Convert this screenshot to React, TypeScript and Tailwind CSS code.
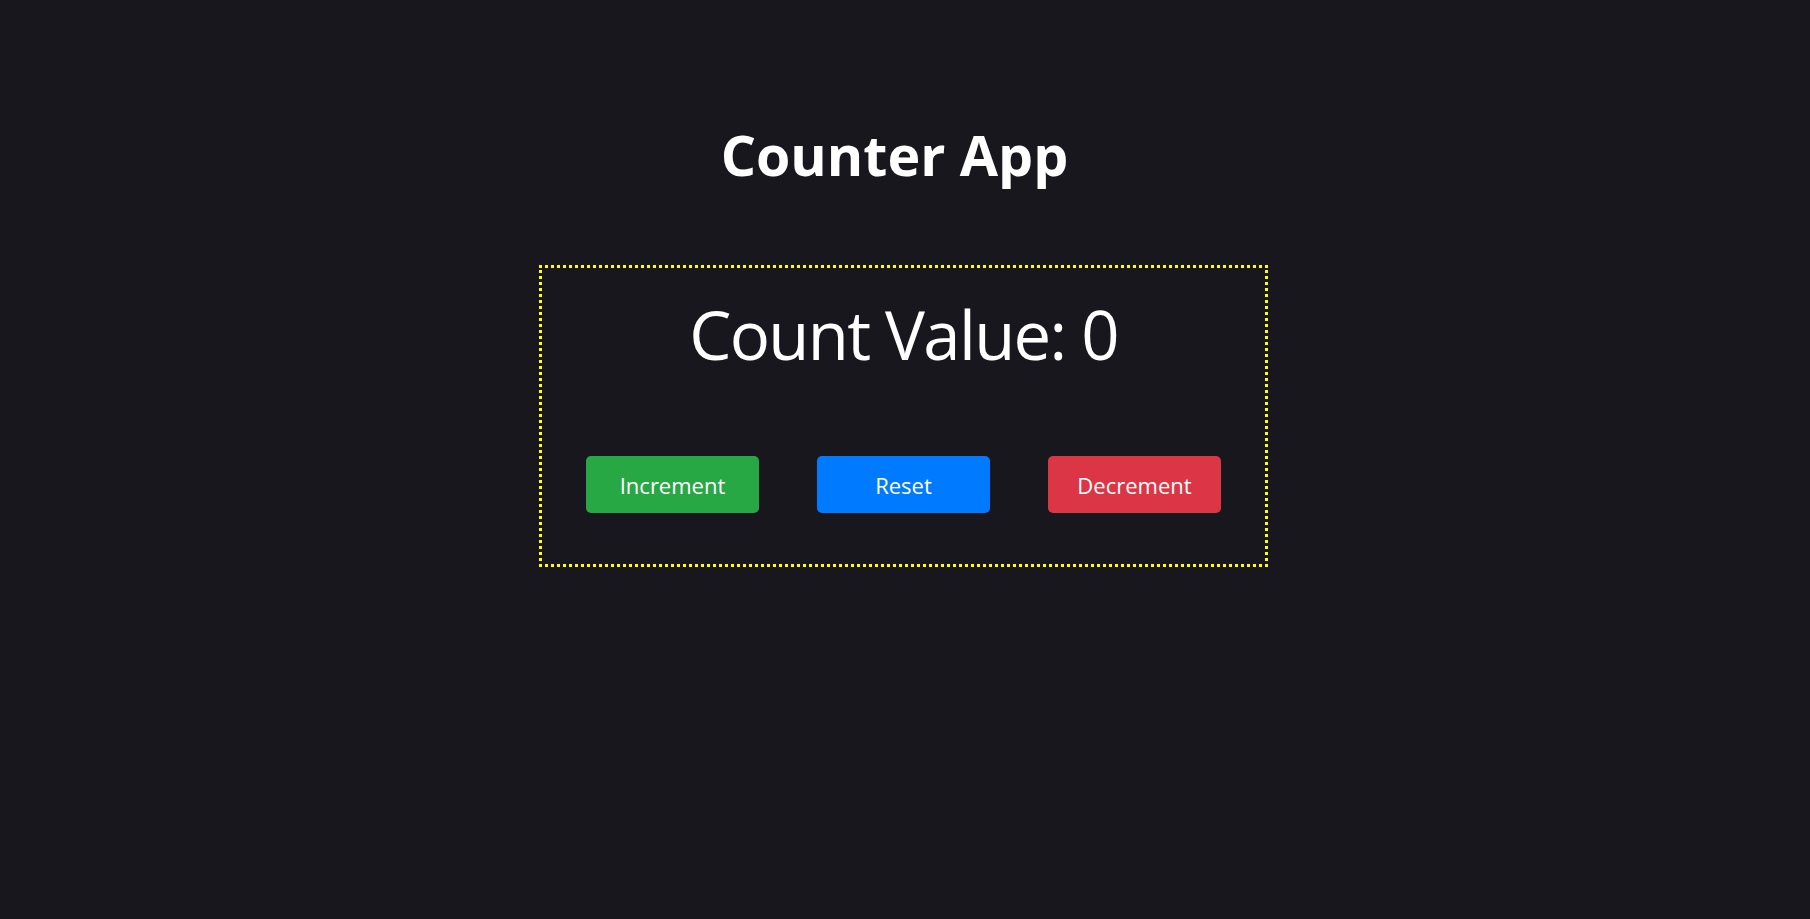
import { useState } from 'react'

function App() {
    // valor atual do contador
    const [count, setCount] = useState<number>(0)

    return (
        <div className="min-h-screen bg-[#18171e] flex flex-col items-center font-['Open_Sans',sans-serif] text-white">
            <h1 className="mt-[127px] text-[55.5px] leading-[55px] font-bold mr-[21px]">
                Counter App
            </h1>

            <div className="mt-[83px] mr-[3px] w-[729px] border-[3px] border-dotted border-[#ffff00] flex flex-col items-center pt-[33px] pb-[51px]">
                <p className="text-[67px] leading-none font-normal tracking-[-0.025em]">
                    Count Value: {count}
                </p>

                <div className="mt-[88px] flex gap-[58px]">
                    <button
                        onClick={() => setCount(count + 1)}
                        className="w-[173px] h-[57px] rounded-[5px] bg-[#28a745] text-[22px] text-white flex items-center justify-center pt-[2px] cursor-pointer"
                    >
                        Increment
                    </button>
                    <button
                        onClick={() => setCount(0)}
                        className="w-[173px] h-[57px] rounded-[5px] bg-[#007bff] text-[22px] text-white flex items-center justify-center pt-[2px] cursor-pointer"
                    >
                        Reset
                    </button>
                    <button
                        onClick={() => setCount(count - 1)}
                        className="w-[173px] h-[57px] rounded-[5px] bg-[#dc3545] text-[22px] text-white flex items-center justify-center pt-[2px] cursor-pointer"
                    >
                        Decrement
                    </button>
                </div>
            </div>
        </div>
    )
}

export default App
